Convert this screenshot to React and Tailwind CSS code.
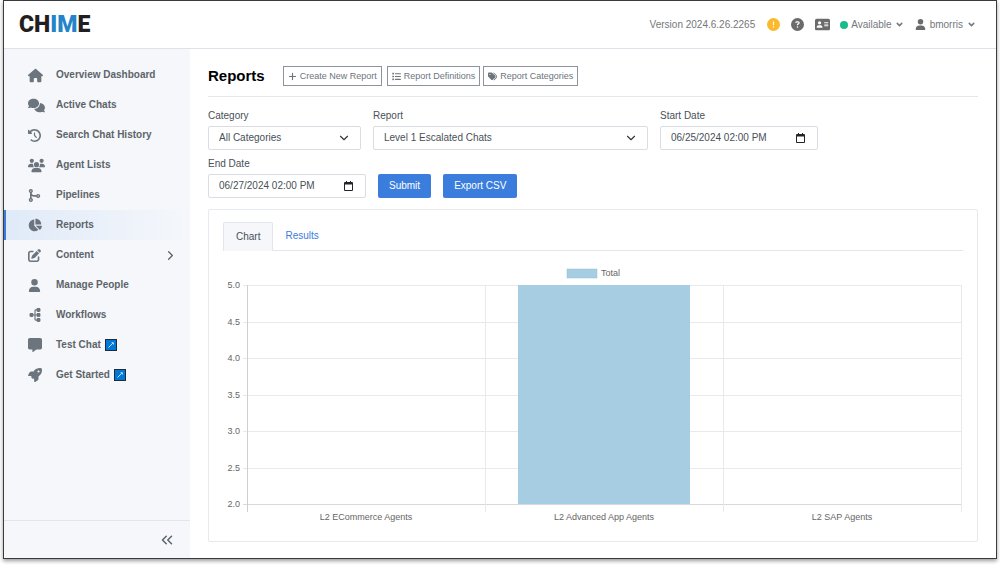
import React, { useState } from "react";
import {
  FaAddressCard,
  FaChartPie,
  FaCircleExclamation,
  FaCircleQuestion,
  FaClockRotateLeft,
  FaCodeMerge,
  FaComments,
  FaHouse,
  FaList,
  FaMessage,
  FaPenToSquare,
  FaPlus,
  FaRocket,
  FaSitemap,
  FaTags,
  FaUser,
  FaUsers,
} from "react-icons/fa6";
import { ChevronDown, ChevronRight, ChevronsLeft } from "lucide-react";

const navItems = [
  { label: "Overview Dashboard", icon: <FaHouse size={15} /> },
  { label: "Active Chats", icon: <FaComments size={17} /> },
  { label: "Search Chat History", icon: <FaClockRotateLeft size={13} /> },
  { label: "Agent Lists", icon: <FaUsers size={17} /> },
  { label: "Pipelines", icon: <FaCodeMerge size={13} /> },
  { label: "Reports", icon: <FaChartPie size={14} />, active: true },
  { label: "Content", icon: <FaPenToSquare size={13} />, expandable: true },
  { label: "Manage People", icon: <FaUser size={13} /> },
  { label: "Workflows", icon: <FaSitemap size={14} className="-rotate-90" /> },
  { label: "Test Chat", icon: <FaMessage size={14} />, external: true },
  { label: "Get Started", icon: <FaRocket size={14} />, external: true },
];

const chartData = [
  { label: "L2 ECommerce Agents", total: 2 },
  { label: "L2 Advanced App Agents", total: 5 },
  { label: "L2 SAP Agents", total: 2 },
];

function ExternalBadge() {
  return (
    <svg viewBox="0 0 12 12" className="ml-1 size-3 shrink-0" aria-hidden="true">
      <rect x="0.5" y="0.5" width="11" height="11" fill="#0078d7" stroke="#222b35" />
      <path d="M3.5 8.5 7.8 4.2M6.6 3.7h1.8v1.8" fill="none" stroke="#d9ecfb" strokeWidth="0.9" />
    </svg>
  );
}

function Header() {
  return (
    <header className="flex h-12 items-center justify-between border-b border-[#dee2e8] pr-5 pl-[15px] text-[#74777a]">
      <a
        href="#home"
        className="font-[Roboto,sans-serif] text-[23px] leading-6 font-black text-[#231f20]"
      >
        CH<span className="text-[#2484c9]">IM</span>E
      </a>
      <div className="flex items-center">
        <span>Version 2024.6.26.2265</span>
        <button className="ml-3 text-[#fcb92c]" aria-label="Alerts">
          <FaCircleExclamation size={13} />
        </button>
        <button className="ml-[11px] text-[#6b6b6b]" aria-label="Help">
          <FaCircleQuestion size={13} />
        </button>
        <button className="ml-[11px] text-[#6b6b6b]" aria-label="Contact card">
          <FaAddressCard size={15} />
        </button>
        <button className="ml-[10px] flex items-center">
          <span className="mr-[3px] size-2 rounded-full bg-[#1cbb8c]" />
          Available
          <ChevronDown size={9} strokeWidth={4} className="ml-[3px]" />
        </button>
        <button className="ml-[11px] flex items-center">
          <FaUser size={11} className="mr-1 text-[#6b6b6b]" />
          bmorris
          <ChevronDown size={9} strokeWidth={4} className="ml-1" />
        </button>
      </div>
    </header>
  );
}

function Sidebar() {
  return (
    <aside className="flex w-[186px] shrink-0 flex-col bg-[#f5f7fb]">
      <nav className="flex-1 pt-[11px]">
        {navItems.map((item) => (
          <a
            key={item.label}
            href="#nav"
            className={
              item.active
                ? "flex h-[30px] items-center border-l-2 border-[#3b7ddd] bg-linear-to-r from-[#e0eaf8] to-[#f5f7fb] pr-3 pl-[22px] font-bold text-[#5d6469]"
                : "flex h-[30px] items-center border-l-2 border-transparent pr-3 pl-[22px] font-bold text-[#5d6469]"
            }
          >
            <span className="flex w-7 shrink-0 text-[#6c757d]">{item.icon}</span>
            {item.label}
            {item.external && <ExternalBadge />}
            {item.expandable && <ChevronRight size={15} className="ml-auto" />}
          </a>
        ))}
      </nav>
      <div className="flex h-[38px] items-center justify-end border-t border-[#e2e5ea] pr-3.5">
        <button aria-label="Collapse sidebar" className="text-[#5d6469]">
          <ChevronsLeft size={18} />
        </button>
      </div>
    </aside>
  );
}

function SelectField({ id, label, width, options }) {
  return (
    <div className={width}>
      <label htmlFor={id} className="block h-[17px]">
        {label}
      </label>
      <div className="relative">
        <select
          id={id}
          className="h-6 w-full appearance-none rounded-xs border border-[#d9dde3] bg-white px-[10px]"
        >
          {options.map((option) => (
            <option key={option}>{option}</option>
          ))}
        </select>
        <ChevronDown
          size={14}
          className="pointer-events-none absolute top-[5px] right-2.5 text-[#343a40]"
        />
      </div>
    </div>
  );
}

function DateField({ id, label, value }) {
  return (
    <div className="w-[158px]">
      <label htmlFor={id} className="block h-[17px]">
        {label}
      </label>
      <div className="flex h-6 items-center rounded-xs border border-[#d9dde3] bg-white pr-3 pl-[10px]">
        <input id={id} type="text" defaultValue={value} className="min-w-0 flex-1" />
        <button type="button" aria-label={"Pick " + label}>
          <svg viewBox="0 0 9 10" className="h-[10px] w-[9px] text-[#212529]" fill="currentColor">
            <path d="M1 1h1V0h1v1h3V0h1v1h1a1 1 0 0 1 1 1v7a1 1 0 0 1-1 1H1a1 1 0 0 1-1-1V2a1 1 0 0 1 1-1ZM1 3.5V9h7V3.5Z" />
          </svg>
        </button>
      </div>
    </div>
  );
}

function ReportChart() {
  const left = 24;
  const top = 34;
  const height = 219;
  const column = 238;
  const ticks = [5, 4.5, 4, 3.5, 3, 2.5, 2];
  const yFor = (value) => Math.round(top + ((5 - value) / 3) * height);

  return (
    <svg viewBox="0 0 740 276" className="block w-full" role="img" aria-label="Total by agent list">
      <rect x="344" y="18" width="30" height="9" fill="#a6cde1" stroke="#97c0d5" strokeWidth="0.5" />
      <text x="378" y="25" fontSize="9" fill="#666">
        Total
      </text>
      {ticks.map((tick) => (
        <g key={tick}>
          <rect x="20" y={yFor(tick)} width="718" height="1" fill={tick === 2 ? "#d9d9d9" : "#e8e9ea"} />
          <text x="17" y={yFor(tick) + 3} fontSize="9" textAnchor="end" fill="#666">
            {tick.toFixed(1)}
          </text>
        </g>
      ))}
      {[0, 1, 2, 3].map((i) => (
        <rect
          key={i}
          x={left + i * column}
          y={top}
          width="1"
          height={height + 8}
          fill={i === 0 ? "#cfcfcf" : "#e8e9ea"}
        />
      ))}
      {chartData.map((row, i) => (
        <g key={row.label}>
          <rect
            x={left + i * column + 33}
            y={yFor(row.total)}
            width="172"
            height={yFor(2) - yFor(row.total)}
            fill="#a6cde1"
          />
          <text
            x={left + i * column + column / 2}
            y="269"
            fontSize="9"
            textAnchor="middle"
            fill="#666"
          >
            {row.label}
          </text>
        </g>
      ))}
    </svg>
  );
}

export default function App() {
  const [tab, setTab] = useState("chart");
  const activeTab = "-mb-px h-[29px] rounded-t-xs border border-b-0 border-[#e3e7ed] bg-[#f5f7fb] px-3 text-[#495057]";
  const inactiveTab = "h-7 px-3 text-[#3b7ddd]";
  const outlineButton =
    "flex h-5 items-center gap-[3px] border border-[#8d949b] px-1 text-[9px] text-[#6c757d]";
  const primaryButton = "mt-[17px] h-6 rounded-xs bg-[#3b7ddd] px-[11px] text-white";

  return (
    <div className="flex min-h-screen flex-col bg-white px-[3px] pb-[6px] font-['Liberation_Sans',Arial,sans-serif] text-[10px] leading-[14px] text-[#495057]">
      <div className="flex flex-1 flex-col border border-[#3a3a3c] shadow-[0_2px_4px_rgba(0,0,0,0.4)]">
        <Header />
        <div className="flex flex-1">
          <Sidebar />
          <main className="min-w-0 flex-1 px-[18px] pt-[17px] pb-4">
            <div className="flex items-center border-b border-[#e5e7ea] pb-[10px]">
              <h1 className="mr-[18px] text-[15px] leading-5 font-bold text-black">Reports</h1>
              <button className={outlineButton}>
                <FaPlus size={9} />
                Create New Report
              </button>
              <button className={outlineButton + " ml-[5px]"}>
                <FaList size={9} />
                Report Definitions
              </button>
              <button className={outlineButton + " ml-[3px]"}>
                <FaTags size={9} />
                Report Categories
              </button>
            </div>

            <form
              className="mt-3 flex flex-wrap gap-x-3 gap-y-[7px]"
              onSubmit={(e) => e.preventDefault()}
            >
              <SelectField
                id="category"
                label="Category"
                width="w-[153px]"
                options={["All Categories"]}
              />
              <SelectField
                id="report"
                label="Report"
                width="w-[275px]"
                options={["Level 1 Escalated Chats"]}
              />
              <DateField id="start" label="Start Date" value="06/25/2024 02:00 PM" />
              <DateField id="end" label="End Date" value="06/27/2024 02:00 PM" />
              <button type="submit" className={primaryButton}>
                Submit
              </button>
              <button type="button" className={primaryButton}>
                Export CSV
              </button>
            </form>

            <section className="mt-[11px] rounded-xs border border-[#e6eaee] p-3.5 pt-3">
              <div className="flex border-b border-[#e3e7ed]">
                <button
                  className={tab === "chart" ? activeTab : inactiveTab}
                  onClick={() => setTab("chart")}
                >
                  Chart
                </button>
                <button
                  className={tab === "results" ? activeTab : inactiveTab}
                  onClick={() => setTab("results")}
                >
                  Results
                </button>
              </div>
              <ReportChart />
            </section>
          </main>
        </div>
      </div>
    </div>
  );
}
